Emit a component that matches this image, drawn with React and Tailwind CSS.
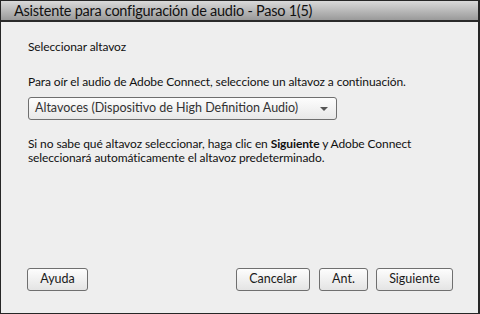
import React from "react";

function Button({ children, className = "" }) {
  return (
    <button
      className={`h-[23px] rounded-[3px] border border-[#6f6f6f] bg-gradient-to-b from-[#fdfdfd] to-[#e4e4e4] text-[12.5px] text-[#1a1a1a] ${className}`}
    >
      {children}
    </button>
  );
}

export default function App() {
  return (
    <div
      className="w-[480px] h-[314px] bg-[#262626] p-[1px] pr-[2px]"
      style={{ fontFamily: 'Lato, "Liberation Sans", sans-serif' }}
    >
      <div className="flex h-full flex-col bg-[#eeeeee]">
        <div className="flex h-[21px] items-center border-b-2 border-[#2a2a2a] bg-gradient-to-b from-[#dadada] to-[#9a9a9a] pl-[13px] text-[14.5px] tracking-[-0.25px] text-[#111]">
          Asistente para configuración de audio - Paso 1(5)
        </div>
        <div className="flex flex-1 flex-col px-[27px] pb-[22px] text-[12px] tracking-[-0.1px]">
          <div className="mt-[16px] text-[#111]">Seleccionar altavoz</div>
          <div className="mt-[17px] text-[#111]">
            Para oír el audio de Adobe Connect, seleccione un altavoz a continuación.
          </div>
          <div className="mt-[6px] flex h-[23px] w-[309px] items-center justify-between rounded-[3px] border border-[#6f6f6f] bg-gradient-to-b from-[#fdfdfd] to-[#e8e8e8] pl-[6px] pr-[8px] text-[12.5px] tracking-normal text-[#333]">
            <span>Altavoces (Dispositivo de High Definition Audio)</span>
            <svg width="8" height="4" viewBox="0 0 8 4">
              <path d="M0 0 H8 L4 4 Z" fill="#555" />
            </svg>
          </div>
          <div className="mt-[17px] leading-[14px] text-[#111]">
            Si no sabe qué altavoz seleccionar, haga clic en <b>Siguiente</b> y Adobe Connect
            <br />
            seleccionará automáticamente el altavoz predeterminado.
          </div>
          <div className="-mr-[2px] mt-auto flex items-center tracking-normal">
            <Button className="-ml-[1px] w-[61px]">Ayuda</Button>
            <div className="flex-1" />
            <Button className="w-[74px]">Cancelar</Button>
            <Button className="ml-[9px] w-[49px]">Ant.</Button>
            <Button className="ml-[8px] w-[77px]">Siguiente</Button>
          </div>
        </div>
      </div>
    </div>
  );
}
